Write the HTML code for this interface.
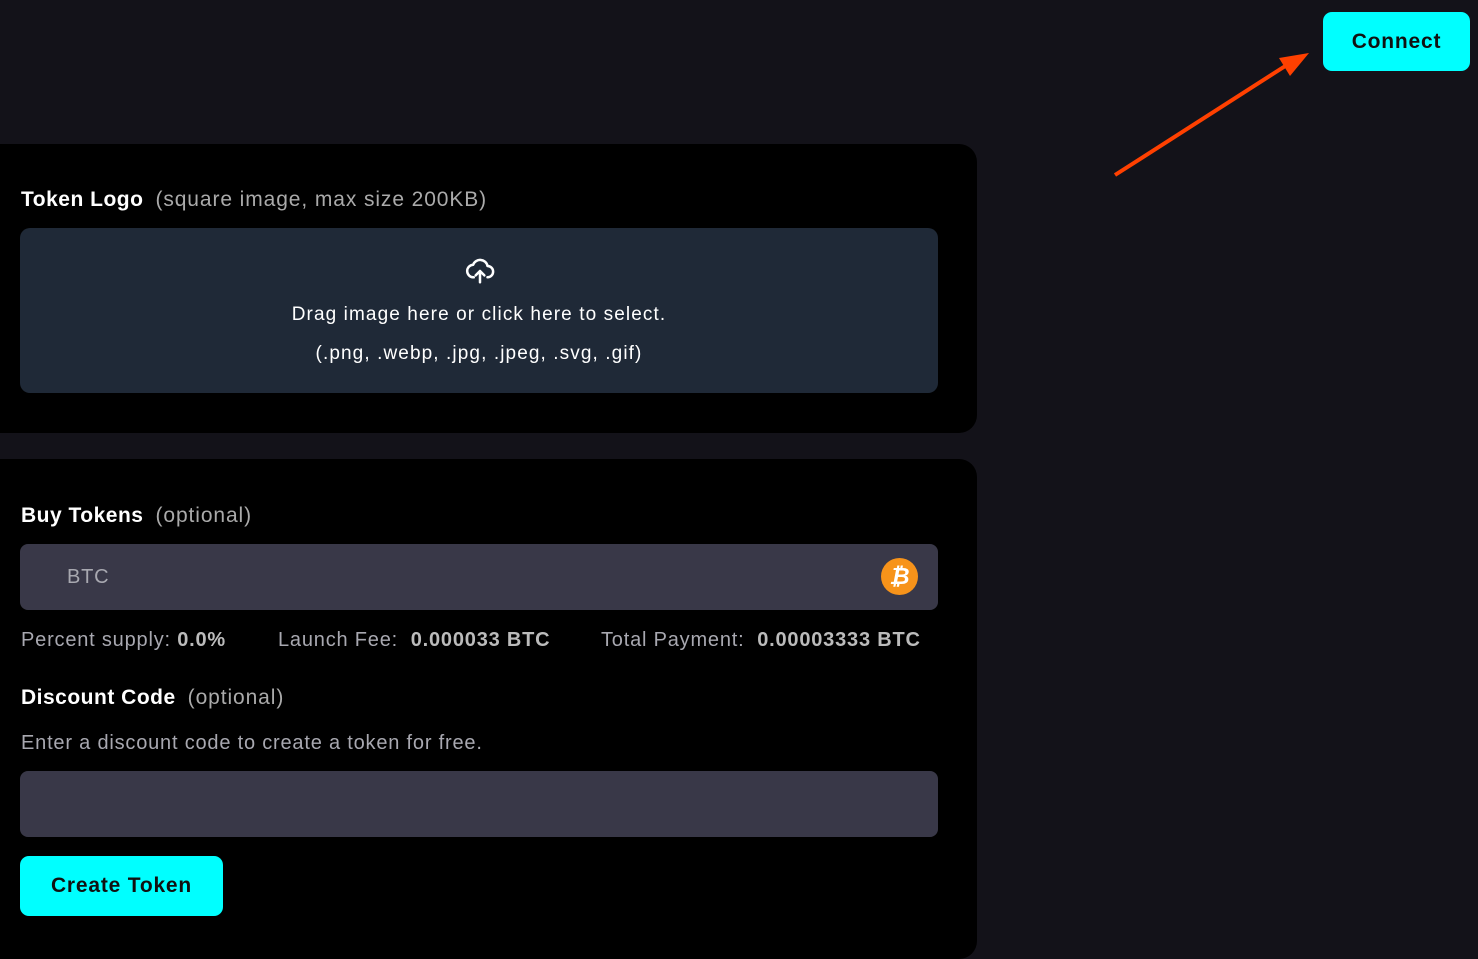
<!DOCTYPE html>
<html><head><style>
*{box-sizing:border-box;margin:0;padding:0}
body{width:1478px;height:935px;background:#131219;font-family:"Liberation Sans",sans-serif;position:relative;overflow:hidden}
.card{position:absolute;left:0;width:977px;background:#000;border-radius:0 18px 18px 0}
.btn{position:absolute;background:#00ffff;color:#111;font-weight:bold;font-size:21px;border-radius:9px;display:flex;align-items:center;justify-content:center;letter-spacing:0.8px}
.h{position:absolute;left:21px;color:#fff;font-weight:bold;font-size:21px;letter-spacing:0.5px}
.h span{font-weight:normal;color:#aaa;margin-left:12px;letter-spacing:0.9px}
.in{position:absolute;left:20px;width:918px;background:#393848;border-radius:8px}
.t{position:absolute;color:#a8a8b0;font-size:20px;letter-spacing:0.8px}
.t b{color:#bbb}
</style></head><body>
<div class="btn" style="left:1323px;top:12px;width:147px;height:59px">Connect</div>
<svg style="position:absolute;left:0;top:0" width="1478" height="200"><line x1="1115" y1="175" x2="1290" y2="63" stroke="#ff4000" stroke-width="4"/><polygon points="1309,53 1279,58 1290,76" fill="#ff4000"/></svg>
<div class="card" style="top:144px;height:289px">
<div class="h" style="top:44px">Token Logo<span>(square image, max size 200KB)</span></div>
<div style="position:absolute;left:20px;top:84px;width:918px;height:165px;background:#1f2937;border-radius:10px;color:#fff;text-align:center;font-size:19px;letter-spacing:1.1px">
<svg style="position:absolute;left:444px;top:28px" width="32" height="30" viewBox="0 0 24 24" fill="none" stroke="#fff" stroke-width="2" stroke-linecap="round" stroke-linejoin="round"><path d="M7 17a5 5 0 0 1-.5-10A6 6 0 0 1 18 8a4 4 0 0 1 0 9"/><path d="M12 21v-9M8.5 15.5 12 12l3.5 3.5"/></svg>
<div style="position:absolute;top:76px;width:100%">Drag image here or click here to select.</div>
<div style="position:absolute;top:115px;width:100%">(.png, .webp, .jpg, .jpeg, .svg, .gif)</div>
</div></div>
<div class="card" style="top:459px;height:500px">
<div class="h" style="top:45px">Buy Tokens<span>(optional)</span></div>
<div class="in" style="top:85px;height:66px"><div class="t" style="left:47px;top:22px">BTC</div>
<div style="position:absolute;left:861px;top:14px;width:37px;height:37px;border-radius:50%;background:#f7931a;color:#fff;font-weight:bold;font-size:23px;text-align:center;line-height:37px;font-style:italic">₿</div></div>
<div class="t" style="left:21px;top:170px">Percent supply: <b>0.0%</b></div>
<div class="t" style="left:278px;top:170px">Launch Fee:&nbsp; <b>0.000033 BTC</b></div>
<div class="t" style="left:601px;top:170px">Total Payment:&nbsp; <b>0.00003333 BTC</b></div>
<div class="h" style="top:227px">Discount Code<span>(optional)</span></div>
<div class="t" style="left:21px;top:273px">Enter a discount code to create a token for free.</div>
<div class="in" style="top:312px;height:66px"></div>
<div class="btn" style="left:20px;top:397px;width:203px;height:60px">Create Token</div>
</div>
</body></html>
